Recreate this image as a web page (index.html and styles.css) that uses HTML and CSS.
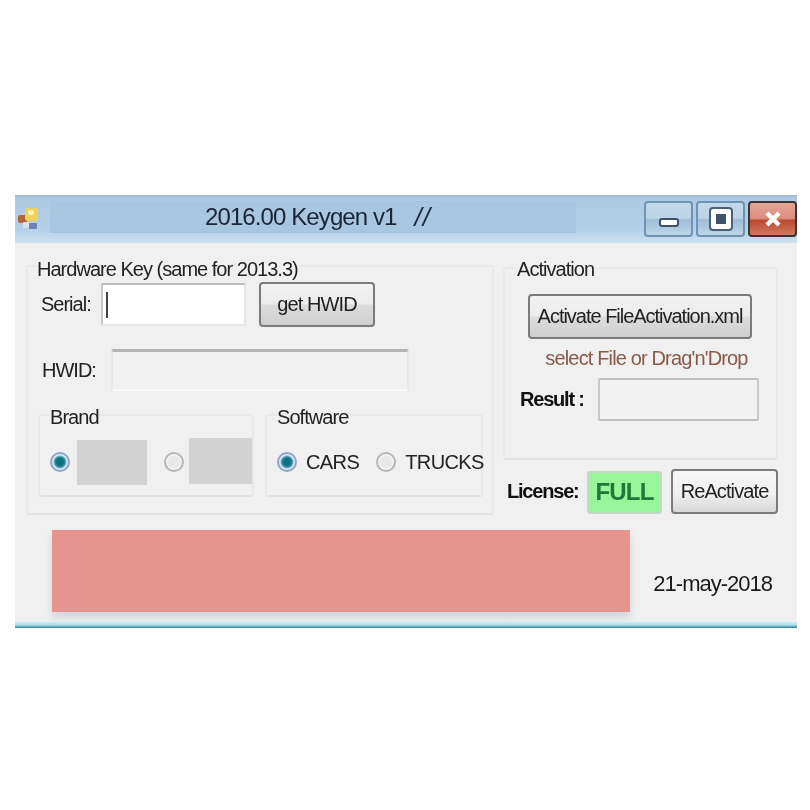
FILE: index.html
```html
<!DOCTYPE html>
<html lang="en">
<head>
<meta charset="utf-8">
<title>2016.00 Keygen v1</title>
<link rel="stylesheet" href="styles.css">
</head>
<body>
<main class="window">
  <header class="titlebar">
    <svg class="app-icon" viewBox="0 0 24 24" width="24" height="26" aria-hidden="true">
      <rect x="1" y="9" width="9" height="8" rx="2" fill="#b5653a"/>
      <rect x="8" y="2" width="13" height="13" rx="3" fill="#f0d35a"/>
      <rect x="11" y="4" width="6" height="5" rx="2" fill="#fbf2b0"/>
      <rect x="6" y="16" width="6" height="6" rx="1" fill="#d9dfe8"/>
      <rect x="12" y="17" width="8" height="6" rx="1" fill="#6d83b5"/>
    </svg>
    <div class="title-band"><span class="title-text">2016.00 Keygen v1</span><span class="title-slash">//</span></div>
    <div class="controls">
      <div class="ctl"><span class="ctl-min"></span></div>
      <div class="ctl"><span class="ctl-max"></span></div>
      <div class="ctl ctl-close"><svg viewBox="0 0 20 20" width="20" height="20" aria-hidden="true"><path d="M4 4 16 16M16 4 4 16" stroke="#fff" stroke-width="4.5" fill="none"/></svg></div>
    </div>
  </header>

  <section class="content">
    <div class="group hw">
      <div class="legend legend-hw">Hardware Key (same for 2013.3)</div>
      <div class="row serial-row">
        <span class="lbl lbl-serial">Serial:</span>
        <div class="input input-serial"><span class="caret"></span></div>
        <div class="btn btn-hwid">get HWID</div>
      </div>
      <div class="row hwid-row">
        <span class="lbl lbl-hwid">HWID:</span>
        <div class="input input-hwid"></div>
      </div>
      <div class="subgroups">
        <div class="group sub sub-brand">
          <div class="legend legend-sub">Brand</div>
          <div class="radios">
            <span class="radio on"></span><span class="blank blank-a"></span>
            <span class="radio"></span><span class="blank blank-b"></span>
          </div>
        </div>
        <div class="group sub sub-soft">
          <div class="legend legend-sub">Software</div>
          <div class="radios">
            <span class="radio on"></span><span class="opt opt-cars">CARS</span>
            <span class="radio"></span><span class="opt">TRUCKS</span>
          </div>
        </div>
      </div>
    </div>

    <div class="side">
      <div class="group act">
        <div class="legend legend-act">Activation</div>
        <div class="btn btn-act">Activate FileActivation.xml</div>
        <div class="hint">select File or Drag'n'Drop</div>
        <div class="row result-row">
          <span class="strong">Result :</span>
          <div class="input input-result"></div>
        </div>
      </div>
      <div class="license">
        <span class="strong">License:</span>
        <div class="full">FULL</div>
        <div class="btn btn-react">ReActivate</div>
      </div>
    </div>
  </section>

  <footer class="footer">
    <div class="redact"></div>
    <span class="date">21-may-2018</span>
  </footer>
  <div class="edge"></div>
</main>
</body>
</html>
```
FILE: styles.css
```css
* { box-sizing: border-box; }
html, body { margin: 0; background: #fff; }
body { height: 810px; overflow: hidden; font-family: "Liberation Sans", Arial, sans-serif; color: #222; }

.window {
  margin: 195px 0 0 15px;
  width: 782px;
  height: 433px;
  background: #f0f0f0;
  display: flex;
  flex-direction: column;
  filter: blur(0.55px);
}

.titlebar {
  height: 48px;
  display: flex;
  background: linear-gradient(#9db9d2 0, #aecae3 8%, #b4d0e8 72%, #cfe1ef 100%);
  position: relative;
}
.app-icon { margin: 10px 0 0 2px; flex: none; }
.title-band {
  margin: 6px 0 0 9px;
  width: 526px;
  height: 32px;
  background: #a9c6e0;
  display: flex;
  align-items: center;
  padding-left: 155px;
  color: #1c2433;
}
.title-text { font-size: 24px; letter-spacing: -0.9px; white-space: nowrap; }
.title-slash { font-size: 26px; font-style: italic; margin-left: 18px; letter-spacing: 1px; }
.controls { margin: 6px 0 0 auto; display: flex; gap: 3px; }
.ctl {
  width: 49px;
  height: 36px;
  border: 2px solid #6f93b2;
  border-radius: 4px;
  background: linear-gradient(#c4d9ea 0, #bcd3e6 48%, #9fbdd6 52%, #bdd6e9 100%);
  display: flex;
  align-items: center;
  justify-content: center;
}
.ctl-min { width: 20px; height: 9px; background: #fff; border: 2px solid #3c4f66; border-radius: 3px; margin-top: 7px; }
.ctl-max { width: 20px; height: 20px; background: #3f5468; border: 5px solid #fff; outline: 2px solid #4a6078; border-radius: 2px; }
.ctl-close {
  width: 49px;
  border-color: #3b3436;
  background: linear-gradient(#e5a596 0, #dc8d7c 48%, #b94a30 55%, #d2785f 100%);
}

.content { display: flex; gap: 9px; padding: 22px 19px 0 11px; height: 272px; }

.group { border: 2px solid #e8e8e8; border-bottom-color: #e2e2e2; border-radius: 3px; }
.legend { background: #f0f0f0; width: fit-content; font-size: 20px; line-height: 24px; letter-spacing: -0.95px; white-space: nowrap; }

.hw { width: 468px; height: 250px; padding: 0 0 0 10px; }
.legend-hw { margin: -10px 0 0 -2px; padding: 0 1px; letter-spacing: -0.98px; }

.row { display: flex; align-items: center; }
.lbl { font-size: 20px; letter-spacing: -1px; }
.serial-row { margin-top: 1px; height: 45px; }
.lbl-serial { margin-left: 3px; width: 60px; }
.input { background: #f2f2f2; border: 2px solid #d4d6d8; border-radius: 2px; }
.input-serial {
  width: 145px;
  height: 43px;
  background: #fff;
  border-color: #b9bdc2 #e4e6e8 #e4e6e8 #c5c8cc;
  display: flex;
  align-items: center;
  padding-left: 3px;
}
.caret { width: 2px; height: 26px; background: #444; }
.btn {
  border: 2px solid #7b7b7b;
  border-radius: 4px;
  background: linear-gradient(#f2f2f2 0, #ececec 48%, #dcdcdc 52%, #cfcfcf 100%);
  display: flex;
  align-items: center;
  justify-content: center;
  font-size: 20px;
  letter-spacing: -0.9px;
  white-space: nowrap;
}
.btn-hwid { width: 116px; height: 45px; margin-left: 13px; }

.hwid-row { margin-top: 22px; height: 42px; }
.lbl-hwid { margin-left: 4px; width: 69px; }
.input-hwid {
  width: 298px;
  height: 42px;
  border-color: #b5b5b5 #e8e8e8 #fafafa #e8e8e8;
  border-top-width: 3px;
}

.subgroups { display: flex; gap: 11px; margin-top: 23px; }
.sub { width: 216px; height: 83px; padding-left: 10px; }
.sub-soft { width: 218px; }
.legend-sub { margin-top: -11px; padding: 0 0 0 0; }
.radios { display: flex; align-items: center; margin-top: 9px; height: 48px; font-size: 20px; letter-spacing: -0.6px; }
.radio {
  flex: none;
  width: 20px;
  height: 20px;
  border-radius: 50%;
  border: 2px solid #b6b6b6;
  background: radial-gradient(circle, #e8e8e8 0 45%, #f6f6f6 70%);
}
.radio.on {
  border-color: #8fa6c6;
  background: radial-gradient(circle, #0d6f80 0 28%, #2c8da0 45%, #dfe8f2 62%);
}
.blank { background: #d3d3d3; display: block; }
.blank-a { width: 74px; height: 45px; margin: 0 17px 0 7px; }
.blank-b { width: 67px; height: 46px; margin-left: 5px; margin-top: -2px; }
.opt { white-space: nowrap; }
.opt-cars { margin: 0 17px 0 9px; }
.radios .opt + .radio + .opt { margin-left: 9px; }

.side { width: 275px; display: flex; flex-direction: column; }
.act { height: 193px; margin-top: 2px; display: flex; flex-direction: column; }
.legend-act { margin: -12px 0 0 11px; padding: 0 1px; }
.btn-act { width: 224px; height: 45px; margin: 13px 0 0 23px; font-size: 20px; letter-spacing: -1.02px; }
.hint { color: #8a5a48; font-size: 20px; letter-spacing: -0.85px; text-align: center; margin: 7px 0 0 0; padding-left: 12px; line-height: 24px; white-space: nowrap; }
.strong { font-weight: 700; font-size: 20px; letter-spacing: -1.2px; color: #111; white-space: nowrap; }
.result-row { margin-top: 8px; padding-left: 15px; }
.result-row .strong { width: 78px; }
.input-result { width: 161px; height: 43px; border-color: #bdbdbd #c9c9c9 #bdbdbd #c9c9c9; }

.license { display: flex; align-items: center; margin-top: 8px; padding-left: 4px; height: 46px; }
.license .strong { width: 80px; }
.full {
  width: 75px;
  height: 43px;
  margin-top: 2px;
  background: #98f59a;
  border: 2px solid #c3d9c4;
  border-radius: 3px;
  color: #1f7a3a;
  font-weight: 700;
  font-size: 24px;
  letter-spacing: -0.8px;
  display: flex;
  align-items: center;
  justify-content: center;
}
.btn-react { width: 107px; height: 45px; margin-left: 9px; background: linear-gradient(#f7f7f7 0, #f0f0f0 55%, #d8d8d8 100%); }

.footer { flex: 1; display: flex; align-items: flex-start; padding: 15px 25px 0 37px; }
.redact { width: 578px; height: 82px; background: #e59490; box-shadow: 0 6px 8px rgba(120,130,150,.25); }
.date { margin: 41px 0 0 auto; font-size: 22px; letter-spacing: -1px; color: #1a1a1a; white-space: nowrap; }
.edge { height: 6px; flex: none; background: linear-gradient(#c5eef6 0, #a9e0ee 50%, #2f7e93 100%); }
```
